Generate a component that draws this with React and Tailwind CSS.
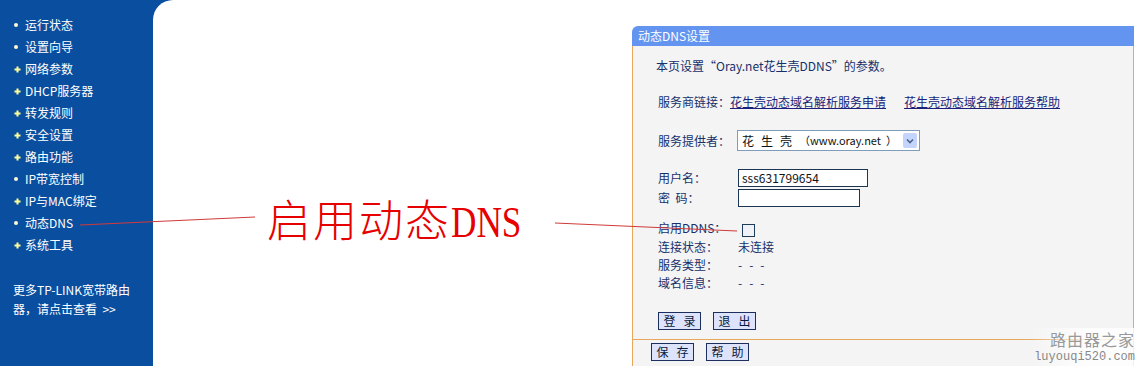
import React from "react";

const menu = [
  ["运行状态", "dot"],
  ["设置向导", "dot"],
  ["网络参数", "plus"],
  ["DHCP服务器", "plus"],
  ["转发规则", "plus"],
  ["安全设置", "plus"],
  ["路由功能", "plus"],
  ["IP带宽控制", "dot"],
  ["IP与MAC绑定", "plus"],
  ["动态DNS", "dot"],
  ["系统工具", "plus"],
];

function Bullet({ type }) {
  if (type === "dot") {
    return <span className="block w-[4px] h-[4px] rounded-full bg-[#fffbd6]" />;
  }
  return (
    <svg width="7" height="7" viewBox="0 0 7 7">
      <path d="M3.5 0.5v6M0.5 3.5h6" stroke="#ffff99" strokeWidth="2" />
    </svg>
  );
}

function Btn({ a, b }) {
  return (
    <div className="w-[43px] h-[18px] border border-[#1c2f5e] bg-[#dde3fb] flex items-center justify-center gap-[8px] text-[12px] leading-none text-[#0b1a3c]">
      <span>{a}</span>
      <span>{b}</span>
    </div>
  );
}

function Row({ label, children, className = "" }) {
  return (
    <div className={"flex items-center pl-[25px] " + className}>
      <span className="w-[80px] shrink-0 whitespace-pre">{label}</span>
      {children}
    </div>
  );
}

function Dashes() {
  return (
    <div className="flex gap-[7px]">
      <span>-</span>
      <span>-</span>
      <span>-</span>
    </div>
  );
}

export default function App() {
  return (
    <div
      className="relative w-[1141px] h-[366px] flex bg-[#0a4f9f] overflow-hidden text-[12px]"
      style={{ fontFamily: '"Noto Sans CJK SC", "Noto Sans", sans-serif' }}
    >
      {/* left menu */}
      <div className="w-[153px] shrink-0 pt-[14px] text-white">
        {menu.map(([t, b]) => (
          <div key={t} className="h-[22px] flex items-center">
            <div className="w-[25px] pl-[14px] flex items-center">
              <Bullet type={b} />
            </div>
            <span className="leading-none">{t}</span>
          </div>
        ))}
        <div className="mt-[24px] pl-[13px] leading-[19px]">
          <div>更多TP-LINK宽带路由</div>
          <div className="whitespace-pre">器，请点击查看  &gt;&gt;</div>
        </div>
      </div>

      {/* main */}
      <div className="flex-1 bg-white rounded-tl-[20px] pl-[479px] pt-[26px]">
        <div className="w-[502px] h-[340px] flex flex-col text-[#17306b]">
          <div className="h-[20px] bg-[#6394f0] rounded-tl-[6px] text-white flex items-center pl-[6px]">
            动态DNS设置
          </div>
          <div className="flex-1 flex flex-col bg-[#f4f4f4] border-x border-b border-[#e8a85c]">
            <div className="mt-[12px] h-[16px] flex items-center pl-[23px]">
              本页设置“Oray.net花生壳DDNS”的参数。
            </div>
            <div className="mt-[20px] h-[16px] flex items-center pl-[25px]">
              <span>服务商链接：</span>
              <a className="underline text-[#1a1f7a]">花生壳动态域名解析服务申请</a>
              <a className="underline text-[#1a1f7a] ml-[18px]">花生壳动态域名解析服务帮助</a>
            </div>
            <Row label="服务提供者：" className="mt-[20px] h-[21px]">
              <div className="ml-[-1px] w-[183px] h-[21px] border border-[#7f9db9] bg-white flex items-center justify-between pl-[4px] pr-[2px] text-[#111]">
                <div className="flex items-center gap-[7px]">
                  <span>花</span>
                  <span>生</span>
                  <span>壳</span>
                  <span className="text-[11px]">（</span>
                  <span className="text-[11px] -ml-[7px]">www.oray.net</span>
                  <span className="text-[11px] -ml-[2px]">）</span>
                </div>
                <div className="w-[14px] h-[15px] bg-[#c3d5fd] rounded-[2px] flex items-center justify-center">
                  <svg width="8" height="6" viewBox="0 0 8 6">
                    <path d="M1 1.5l3 3 3-3" stroke="#4d6185" strokeWidth="1.6" fill="none" />
                  </svg>
                </div>
              </div>
            </Row>
            <Row label="用户名：" className="mt-[18px] h-[18px]">
              <div className="w-[130px] h-[18px] border border-[#1c3550] bg-white pl-[3px] flex items-center text-[#111]">
                sss631799654
              </div>
            </Row>
            <Row label="密  码：" className="mt-[2px] h-[18px]">
              <div className="w-[122px] h-[18px] border border-[#1c3550] bg-white" />
            </Row>
            <Row label="启用DDNS：" className="mt-[13px] h-[16px]">
              <div className="ml-[4px] mt-[4px] w-[13px] h-[13px] border border-[#1c3c5c] bg-[#f0f2f8]" />
            </Row>
            <Row label="连接状态：" className="mt-[2px] h-[18px]">
              <span>未连接</span>
            </Row>
            <Row label="服务类型：" className="h-[18px]">
              <Dashes />
            </Row>
            <Row label="域名信息：" className="h-[18px]">
              <Dashes />
            </Row>
            <div className="mt-[20px] pl-[25px] flex gap-[12px]">
              <Btn a="登" b="录" />
              <Btn a="退" b="出" />
            </div>
          </div>
          <div className="h-[26px] shrink-0 bg-[#f4f4f4] border-x border-[#e8a85c] pl-[18px] pt-[3px] flex gap-[12px] items-start">
            <Btn a="保" b="存" />
            <Btn a="帮" b="助" />
          </div>
        </div>
      </div>

      {/* annotation */}
      <div className="absolute left-[267px] top-[194px] flex items-baseline text-[#e60000] leading-[48px]">
        <span className="text-[44px] tracking-[2px] font-light">启用动态</span>
        <span
          className="text-[44px] inline-block origin-left scale-x-80"
          style={{ fontFamily: '"Liberation Serif", serif' }}
        >
          DNS
        </span>
      </div>
      <svg className="absolute inset-0 pointer-events-none" width="1141" height="366">
        <line x1="80" y1="225" x2="255" y2="217" stroke="#d03a3a" strokeWidth="1" />
        <line x1="555" y1="223" x2="737" y2="231" stroke="#d03a3a" strokeWidth="1" />
      </svg>

      {/* watermark */}
      <div className="absolute right-0 bottom-0 w-[112px] h-[38px] bg-gradient-to-r from-white/0 via-white/80 to-white/80 flex flex-col items-end pr-[6px] leading-none">
        <span className="text-[16px] text-[#999] mt-[3px] tracking-[1px]">路由器之家</span>
        <span
          className="text-[12px] text-[#888] mt-[4px]"
          style={{ fontFamily: '"Liberation Mono", monospace' }}
        >
          luyouqi520.com
        </span>
      </div>
    </div>
  );
}
